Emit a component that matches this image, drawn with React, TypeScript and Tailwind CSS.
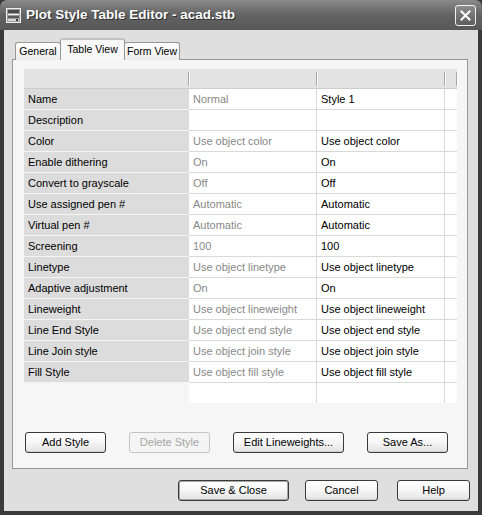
import React from 'react';

const rows: [string, string, string][] = [
  ['Name', 'Normal', 'Style 1'],
  ['Description', '', ''],
  ['Color', 'Use object color', 'Use object color'],
  ['Enable dithering', 'On', 'On'],
  ['Convert to grayscale', 'Off', 'Off'],
  ['Use assigned pen #', 'Automatic', 'Automatic'],
  ['Virtual pen #', 'Automatic', 'Automatic'],
  ['Screening', '100', '100'],
  ['Linetype', 'Use object linetype', 'Use object linetype'],
  ['Adaptive adjustment', 'On', 'On'],
  ['Lineweight', 'Use object lineweight', 'Use object lineweight'],
  ['Line End Style', 'Use object end style', 'Use object end style'],
  ['Line Join style', 'Use object join style', 'Use object join style'],
  ['Fill Style', 'Use object fill style', 'Use object fill style'],
];

const headerCols = ['w-[165px]', 'w-[128px]', 'w-[128px]', 'w-[12px]'];

function XpButton({
  label, width, disabled, primary,
}: {
  label: string;
  width: string;
  disabled?: boolean;
  primary?: boolean;
}) {
  const base = 'h-[21px] rounded-[3px] border flex items-center justify-center';
  if (disabled) {
    return (
      <div className={`${base} ${width} border-[#c4c4c4] bg-[#f4f4f4] text-[#a6a6a6]`}>
        {label}
      </div>
    );
  }
  return (
    <div
      className={`${base} ${width} border-[#3a3a3a] bg-gradient-to-b from-white via-[#f6f6f6] to-[#e2e2e2] text-black ${
        primary ? 'shadow-[inset_0_0_0_1px_#a8a8a8]' : 'shadow-[inset_0_-1px_0_#d0d0d0]'
      }`}
    >
      {label}
    </div>
  );
}

function TitleIcon() {
  return (
    <svg width="17" height="17" viewBox="0 0 17 17" aria-hidden="true">
      <rect x="1.5" y="1.5" width="14" height="14" fill="#9a9a9a" stroke="#f0f0f0" />
      <rect x="3" y="3" width="11" height="3" fill="#4a4a4a" />
      <rect x="3" y="7" width="11" height="1" fill="#f2f2f2" />
      <rect x="3" y="9" width="11" height="2" fill="#5a5a5a" />
      <rect x="3" y="12" width="11" height="2" fill="#d8d8d8" />
      <rect x="11" y="12" width="2" height="2" fill="#3a3a3a" />
    </svg>
  );
}

export default function App() {
  return (
    <div className="w-[482px] h-[515px] bg-[#3a3a3a] flex flex-col font-['Liberation_Sans',Arial,sans-serif] text-[11px] text-black select-none">
      {/* Title bar */}
      <div className="h-[30px] shrink-0 rounded-t-[7px] bg-gradient-to-b from-[#8a8a8a] via-[#626262] to-[#585858] flex items-center pl-[5px] pr-[6px]">
        <TitleIcon />
        <span className="ml-[4px] text-[13.5px] font-bold text-white [text-shadow:1px_1px_0_#2e2e2e]">
          Plot Style Table Editor - acad.stb
        </span>
        <div className="ml-auto w-[21px] h-[21px] rounded-[3px] border border-[#f2f2f2] bg-gradient-to-b from-[#8c8c8c] to-[#5c5c5c] flex items-center justify-center">
          <svg width="11" height="11" viewBox="0 0 11 11" aria-hidden="true">
            <path d="M1.5 1.5 L9.5 9.5 M9.5 1.5 L1.5 9.5" stroke="#ffffff" strokeWidth="2" strokeLinecap="square" />
          </svg>
        </div>
      </div>

      {/* Client area */}
      <div className="flex-1 mx-[4px] mb-[4px] bg-[#dfdfdf] flex flex-col">
        {/* Tabs */}
        <div className="h-[29px] shrink-0 pt-[8px] pl-[11px] flex items-end relative z-10 text-[10.5px]">
          <div className="h-[18px] w-[46px] mb-[-1px] rounded-t-[3px] border border-b-0 border-[#979797] bg-gradient-to-b from-white to-[#ececec] flex items-center justify-center">
            General
          </div>
          <div className="h-[22px] w-[65px] mb-[-1px] -mx-px rounded-t-[3px] border border-b-0 border-[#979797] border-t-[#c2c2c2] border-t-2 bg-[#f8f8f8] flex items-start justify-center pt-[2px]">
            Table View
          </div>
          <div className="h-[18px] w-[56px] mb-[-1px] rounded-t-[3px] border border-b-0 border-[#979797] bg-gradient-to-b from-white to-[#ececec] flex items-center justify-center">
            Form View
          </div>
        </div>

        {/* Tab panel */}
        <div className="ml-[8px] w-[456px] h-[410px] shrink-0 border border-[#979797] bg-[#f6f6f6] pt-[9px] pl-[11px] flex flex-col">
          <div className="w-[433px] flex flex-col">
            {/* header */}
            <div className="h-[20px] flex bg-[#e3e3e3] border-b border-[#cdcdcd]">
              {headerCols.map((w, i) => (
                <div key={i} className={`${w} flex items-center justify-end`}>
                  <div className="w-px h-[14px] bg-[#a6a6a6] shadow-[1px_0_0_#ffffff]" />
                </div>
              ))}
            </div>
            {rows.map(([label, a, b]) => (
              <div key={label} className="h-[21px] flex">
                <div className="w-[165px] bg-[#dcdcdc] border-b border-[#f4f4f4] pl-[4px] flex items-center">
                  {label}
                </div>
                <div className="w-[128px] bg-white border-b border-r border-[#d9d9d9] pl-[4px] flex items-center text-[#888888]">
                  {a}
                </div>
                <div className="w-[128px] bg-white border-b border-r border-[#d9d9d9] pl-[4px] flex items-center">
                  {b}
                </div>
                <div className="w-[12px] bg-white border-b border-[#d9d9d9]" />
              </div>
            ))}
            <div className="h-[20px] flex">
              <div className="w-[165px]" />
              <div className="w-[128px] bg-white border-r border-[#d9d9d9]" />
              <div className="w-[128px] bg-white border-r border-[#d9d9d9]" />
              <div className="w-[12px] bg-white" />
            </div>
          </div>

          <div className="mt-[29px] pl-[1px] flex gap-[23px]">
            <XpButton label="Add Style" width="w-[81px]" />
            <XpButton label="Delete Style" width="w-[81px]" disabled />
            <XpButton label="Edit Lineweights..." width="w-[111px]" />
            <XpButton label="Save As..." width="w-[81px]" />
          </div>
        </div>

        {/* Bottom buttons */}
        <div className="mt-[11px] pr-[8px] flex justify-end">
          <XpButton label="Save & Close" width="w-[111px]" primary />
          <div className="w-[16px]" />
          <XpButton label="Cancel" width="w-[73px]" />
          <div className="w-[19px]" />
          <XpButton label="Help" width="w-[73px]" />
        </div>
      </div>
    </div>
  );
}
